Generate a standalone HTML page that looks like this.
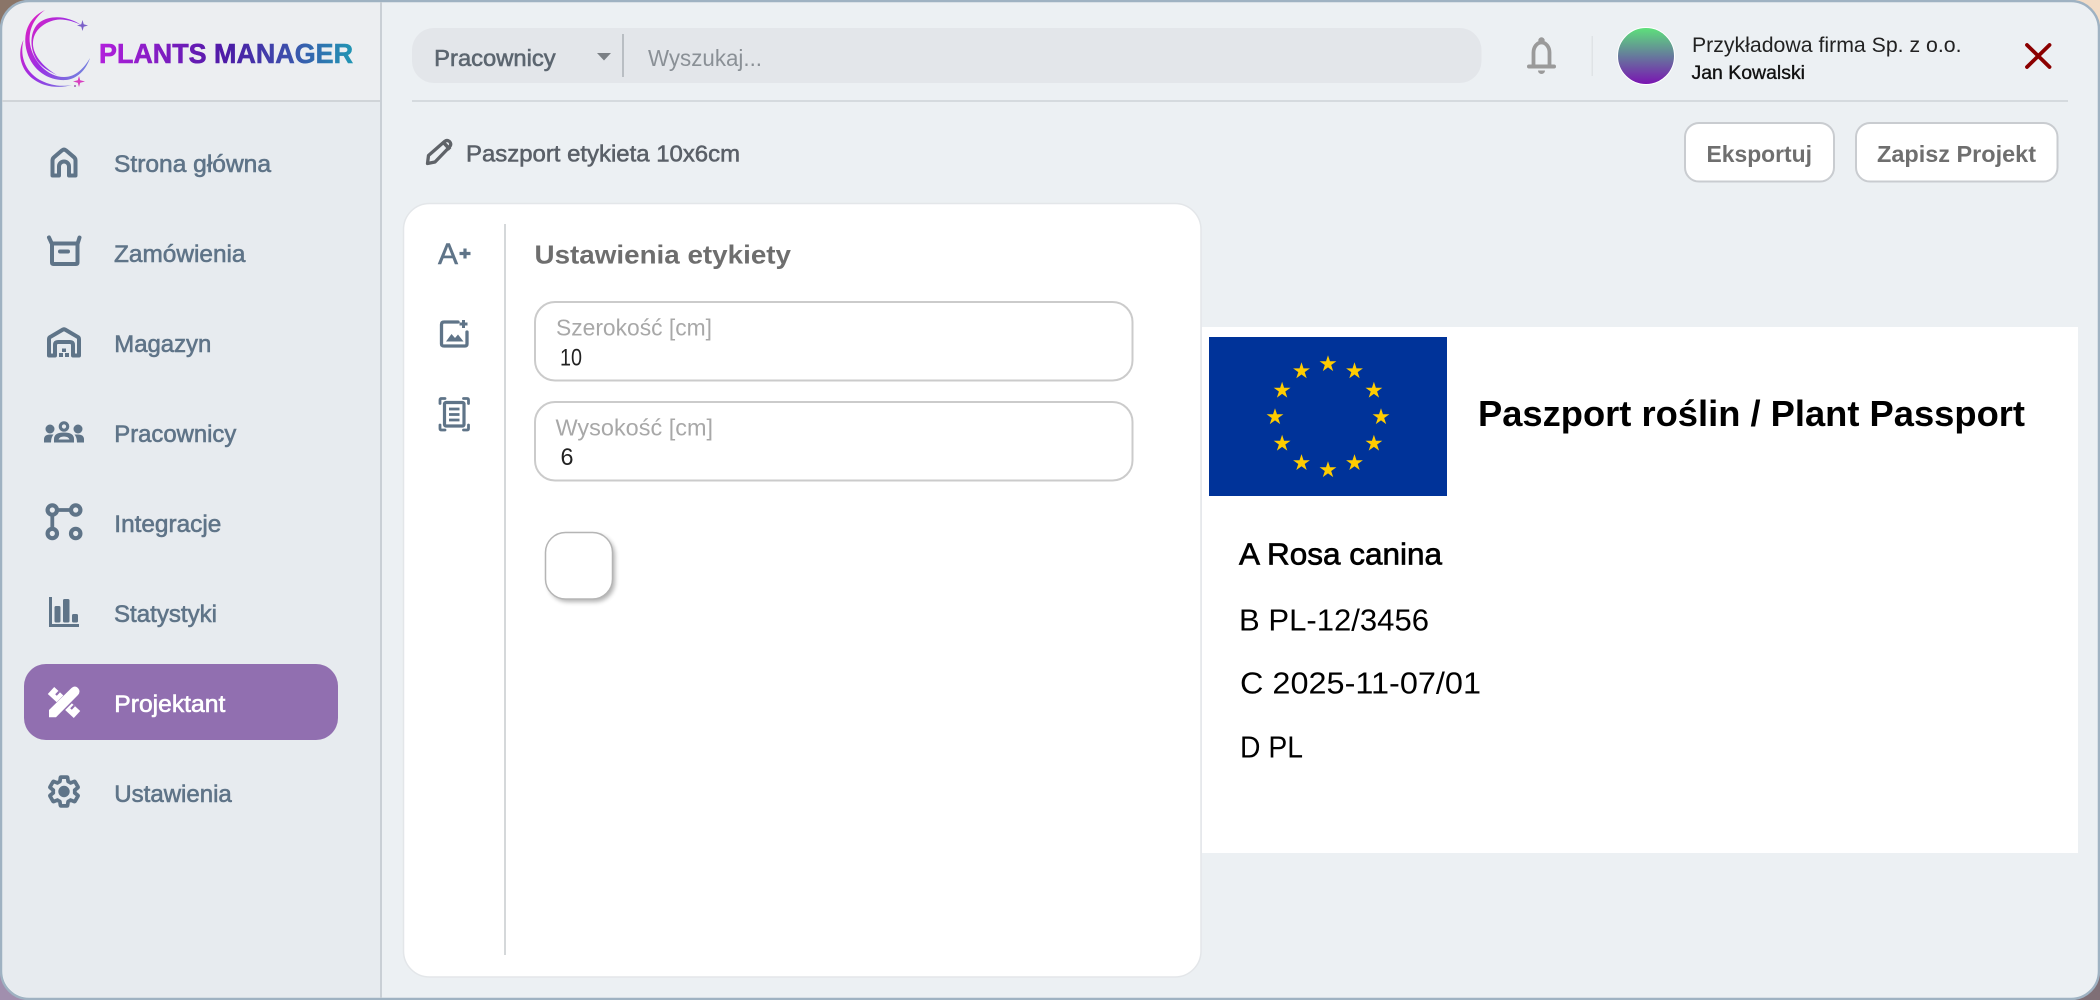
<!DOCTYPE html>
<html lang="pl"><head><meta charset="utf-8"><title>Plants Manager</title>
<style>
html,body{margin:0;padding:0;width:2100px;height:1000px;overflow:hidden;background:#ecf0f3}
svg{display:block}
text{font-family:"Liberation Sans",sans-serif;white-space:pre}
.nav{font-size:24px;fill:#5f7488;stroke:#5f7488;stroke-width:.6px}
.ic{fill:none;stroke:#5f7488;stroke-width:4;stroke-linejoin:round;stroke-linecap:round}
.f{fill:#5f7488}
</style></head><body>
<svg width="2100" height="1000" viewBox="0 0 2100 1000" xmlns="http://www.w3.org/2000/svg">
<defs>
<linearGradient id="lt" gradientUnits="userSpaceOnUse" x1="99" y1="0" x2="353" y2="0"><stop offset="0" stop-color="#b21fdc"/><stop offset=".5" stop-color="#4c1aa6"/><stop offset=".75" stop-color="#3c50ac"/><stop offset="1" stop-color="#2196b4"/></linearGradient>
<linearGradient id="lg" gradientUnits="userSpaceOnUse" x1="20" y1="20" x2="92" y2="70"><stop offset="0" stop-color="#e41fc0"/><stop offset=".5" stop-color="#9a2fe4"/><stop offset="1" stop-color="#6f8ade"/></linearGradient>
<linearGradient id="av" x1="0" y1="0" x2="0" y2="1"><stop offset="0" stop-color="#5de27a"/><stop offset=".5" stop-color="#667a9c"/><stop offset="1" stop-color="#7a12b2"/></linearGradient>
<polygon id="st" points="0,-8.800 5.200,7.100 -8.400,-2.700 8.400,-2.700 -5.200,7.100" fill="#ffcc00"/>
</defs>
<!-- desktop corners -->
<rect x="0" y="0" width="30" height="30" fill="#8a7568"/>
<rect x="2070" y="0" width="30" height="30" fill="#f3dcc6"/>
<rect x="0" y="970" width="30" height="30" fill="#a18fae"/>
<rect x="2070" y="970" width="30" height="30" fill="#7f6f76"/>
<!-- window -->
<rect x="1" y="1" width="2098" height="998" rx="28" fill="#ecf0f3" stroke="#9fb2c2" stroke-width="2.5"/>
<!-- sidebar -->
<path d="M380 2.500H30A27.500 27.500 0 0 0 2.500 30V970A27.500 27.500 0 0 0 30 997.500H380Z" fill="#e7ebef"/>
<path d="M380 2.500H30A27.500 27.500 0 0 0 2.500 30V100H380Z" fill="#eceef1"/>
<rect x="380" y="2" width="2" height="996" fill="#c9cfd5"/>
<rect x="2" y="100" width="378" height="2" fill="#d0d4d8"/>
<!-- logo -->
<path d="M23.500 40C16 55 21 77 45 85C55 88 65 87 72 85C60 87 50 85 42 81C27 74 19 58 23.500 40Z" fill="url(#lg)"/>
<path d="M45 10C28 18 22 34 27 52C33 72 50 81 66 80C77 79 86 70 90 58C84 68 76 77 64 77C48 77 33 62 30 44C28 30 34 18 45 10Z" fill="url(#lg)"/>
<path d="M81 25C70 17 52 14 40 22C29 30 29 50 38 62C43 68 50 72 57 75C43 67 32 54 33 42C34 28 48 20 60 19.500C68 19.500 75 22 81 25Z" fill="url(#lg)"/>
<path d="M82.500 20L83.700 24.300L88 25.500L83.700 26.700L82.500 31L81.300 26.700L77 25.500L81.300 24.300Z" fill="#7a5fc8"/>
<path d="M79 76L80.200 80.300L85 81.500L80.200 82.700L79 87L77.800 82.700L73 81.500L77.800 80.300Z" fill="#d83ec0"/>
<circle cx="75" cy="86" r="1" fill="#9a5fb0"/>
<text x="99" y="63" font-size="28" font-weight="700" fill="url(#lt)" stroke="url(#lt)" stroke-width=".6" textLength="254" lengthAdjust="spacingAndGlyphs">PLANTS MANAGER</text>
<!-- nav -->
<rect x="24" y="664" width="314" height="76" rx="22" fill="#916fb0"/>
<text class="nav" x="114" y="172" textLength="157" lengthAdjust="spacingAndGlyphs">Strona główna</text>
<text class="nav" x="114" y="262" textLength="131.500" lengthAdjust="spacingAndGlyphs">Zamówienia</text>
<text class="nav" x="114.300" y="352" textLength="97" lengthAdjust="spacingAndGlyphs">Magazyn</text>
<text class="nav" x="114.300" y="442" textLength="122" lengthAdjust="spacingAndGlyphs">Pracownicy</text>
<text class="nav" x="114.300" y="532" textLength="107" lengthAdjust="spacingAndGlyphs">Integracje</text>
<text class="nav" x="114" y="622" textLength="103" lengthAdjust="spacingAndGlyphs">Statystyki</text>
<text class="nav" x="114.300" y="712" textLength="111" lengthAdjust="spacingAndGlyphs" style="fill:#fff;stroke:#fff">Projektant</text>
<text class="nav" x="114.300" y="802" textLength="117.500" lengthAdjust="spacingAndGlyphs">Ustawienia</text>
<!-- home -->
<path class="ic" d="M52.500 175.500V160.500Q52.500 158.500 54 157.200L62 150.400Q64 148.800 66 150.400L74 157.200Q75.500 158.500 75.500 160.500V175.500H69V166.500A5 5 0 0 0 59 166.500V175.500Z"/>
<!-- box -->
<path class="ic" d="M49 237.500L52 244V262.500Q52 264 53.500 264H76Q77.500 264 77.500 262.500V244L79.500 237.500M52 243.500H77.500M60 251.500H68"/>
<!-- warehouse -->
<path class="ic" d="M49 355.500V339Q49 337.500 50.500 336.800L63 329.500Q64 329 65 329.500L77.500 336.800Q79 337.500 79 339V355.500H73V345Q73 342 70 342H58Q55 342 55 345V355.500Z"/>
<rect class="f" x="59" y="353" width="4" height="4"/><rect class="f" x="65" y="353" width="4" height="4"/><rect class="f" x="62" y="348.500" width="4" height="3.500"/>
<!-- team -->
<circle cx="64" cy="426.500" r="3.700" fill="none" stroke="#5f7488" stroke-width="3.200"/>
<path class="f" fill-rule="evenodd" d="M54 442.500V439Q54 432.500 64 432.500Q74 432.500 74 439V442.500ZM58.500 439.500H69.500Q68.500 436.500 64 436.500Q59.500 436.500 58.500 439.500Z"/>
<circle class="f" cx="50" cy="429" r="4.500"/><circle class="f" cx="78" cy="429" r="4.500"/>
<path class="f" d="M44 442.500V439.500Q44 434.500 50 434.500H53.500Q51 437.500 51 442.500ZM84 442.500V439.500Q84 434.500 78 434.500H74.500Q77 437.500 77 442.500Z"/>
<!-- integration -->
<g fill="none" stroke="#5f7488" stroke-width="4.200"><circle cx="52.300" cy="510" r="4.700"/><circle cx="75.700" cy="510" r="4.700"/><circle cx="52.300" cy="533.500" r="4.700"/><circle cx="75.700" cy="533.500" r="4.700"/></g>
<path d="M56 510H72M52.300 514V530" stroke="#5f7488" stroke-width="3.800" fill="none"/>
<!-- stats -->
<path d="M50.500 597V625.500H79" fill="none" stroke="#5f7488" stroke-width="3"/>
<rect class="f" x="54.500" y="606" width="6" height="16.500" rx="1.500"/><rect class="f" x="63" y="599" width="6.500" height="23.500" rx="1.500"/><rect class="f" x="72" y="614" width="6" height="8.500" rx="1.500"/>
<!-- tools active -->
<path d="M51 690.500L77 714.500" stroke="#fff" stroke-width="9.500"/>
<path d="M56 695L59.200 691.600M71 709L74.200 705.600" stroke="#916fb0" stroke-width="2.200" fill="none"/>
<path d="M77 690L53 714" stroke="#916fb0" stroke-width="11.500"/>
<path d="M49 717.300V710L71.500 688Q75 685 78 688Q81 691.500 78 695L56 717.300Z" fill="#fff"/>
<!-- gear -->
<g transform="translate(46 773.500) scale(1.500)"><path fill="none" stroke="#5f7488" stroke-width="2.500" stroke-linejoin="round" d="M19.140 12.940c.04-.3.06-.61.06-.94 0-.32-.02-.64-.07-.94l2.030-1.580c.18-.14.23-.41.12-.61l-1.920-3.320c-.12-.22-.37-.29-.59-.22l-2.390.96c-.5-.38-1.030-.7-1.620-.94l-.36-2.540c-.04-.24-.24-.41-.48-.41h-3.840c-.24 0-.43.17-.47.41l-.36 2.540c-.59.24-1.130.57-1.620.94l-2.390-.96c-.22-.08-.47 0-.59.22L2.740 8.870c-.12.21-.08.47.12.61l2.030 1.580c-.05.3-.09.63-.09.94s.02.64.07.94l-2.030 1.580c-.18.14-.23.41-.12.61l1.920 3.320c.12.22.37.29.59.22l2.390-.96c.5.38 1.030.7 1.620.94l.36 2.540c.05.24.24.41.48.41h3.840c.24 0 .44-.17.47-.41l.36-2.540c.59-.24 1.130-.56 1.620-.94l2.390.96c.22.08.47 0 .59-.22l1.920-3.320c.12-.22.07-.47-.12-.61l-2.010-1.580z"/><circle cx="12" cy="12" r="3.800" fill="#5f7488"/></g>
<!-- search -->
<rect x="412" y="28" width="1069.500" height="55" rx="22" fill="#e3e6ea"/>
<text x="434.200" y="66" font-size="23" fill="#5c6670" stroke="#5c6670" stroke-width=".6" textLength="121.500" lengthAdjust="spacingAndGlyphs">Pracownicy</text>
<path d="M597 53H611L604 60.500Z" fill="#7b8085"/>
<rect x="622" y="34" width="2" height="43" fill="#b9bec3"/>
<text x="648" y="66" font-size="23" fill="#8a9096" textLength="114" lengthAdjust="spacingAndGlyphs">Wyszukaj...</text>
<rect x="412" y="100" width="1656" height="2" fill="#d5dade"/>
<!-- bell -->
<path d="M1533.500 66V52.500A8 10 0 0 1 1549.500 52.500V66" fill="none" stroke="#9a9a9a" stroke-width="3.800"/>
<path d="M1529 66.500H1554" stroke="#9a9a9a" stroke-width="4" stroke-linecap="round"/>
<circle cx="1541.500" cy="40.500" r="3.200" fill="#9a9a9a"/>
<path d="M1538 70.500H1545A3.500 3.500 0 0 1 1538 70.500Z" fill="#9a9a9a"/>
<rect x="1591.500" y="36" width="1.500" height="40" fill="#dfe3e6"/>
<circle cx="1646" cy="56" r="28.500" fill="url(#av)" stroke="#fff" stroke-width="1"/>
<text x="1692" y="52" font-size="21" fill="#222" textLength="269.500" lengthAdjust="spacingAndGlyphs">Przykładowa firma Sp. z o.o.</text>
<text x="1691.500" y="79" font-size="19" fill="#111" stroke="#111" stroke-width=".35" textLength="113.500" lengthAdjust="spacingAndGlyphs">Jan Kowalski</text>
<path d="M2027 45L2049.500 67M2049.500 45L2027 67" stroke="#8b0000" stroke-width="3.800" stroke-linecap="round"/>
<!-- subheader -->
<path d="M427.500 163.500L428.500 155.500L444.500 141.500Q447 139.500 449.500 141.500Q452 144 449.500 147L435 162Z" fill="none" stroke="#5f6368" stroke-width="3.300" stroke-linejoin="round"/>
<path d="M443.500 142.500L450 149.500" stroke="#5f6368" stroke-width="3.500"/>
<text x="466" y="161.500" font-size="23" fill="#5a6068" stroke="#5a6068" stroke-width=".55" textLength="274" lengthAdjust="spacingAndGlyphs">Paszport etykieta 10x6cm</text>
<rect x="1685" y="123" width="149" height="58.500" rx="14" fill="#fff" stroke="#c9ccd0" stroke-width="2"/>
<text x="1706.500" y="162" font-size="23" font-weight="700" fill="#6f6f6f" textLength="105.500" lengthAdjust="spacingAndGlyphs">Eksportuj</text>
<rect x="1856" y="123" width="201.500" height="58.500" rx="14" fill="#fff" stroke="#c9ccd0" stroke-width="2"/>
<text x="1877" y="162" font-size="23" font-weight="700" fill="#6f6f6f" textLength="159" lengthAdjust="spacingAndGlyphs">Zapisz Projekt</text>
<!-- left panel -->
<rect x="403.500" y="203.500" width="797.500" height="773.500" rx="26" fill="#fff" stroke="#e3e6e9" stroke-width="1.500"/>
<rect x="504" y="224" width="2" height="731" fill="#d5d8da"/>
<text x="438" y="264" font-size="30" fill="#5f7488" stroke="#5f7488" stroke-width=".5" textLength="20" lengthAdjust="spacingAndGlyphs">A</text>
<path d="M459.500 253.500H470.500M465 248.500V258.500" stroke="#5f7488" stroke-width="3.200" fill="none"/>
<path class="ic" d="M458 322H444Q441.500 322 441.500 324.500V344Q441.500 346 444 346H465Q467 346 467 344V332" style="stroke-width:3.300"/>
<path d="M463.500 320V328M459.500 324H467.500" stroke="#5f7488" stroke-width="3" fill="none"/>
<path class="f" d="M446 341.500L451.500 334L455 338L458 334.500L463.500 341.500Z"/>
<rect x="444.500" y="402.500" width="19.500" height="23.500" rx="1.500" fill="none" stroke="#5f7488" stroke-width="3.200"/>
<path d="M449 409H459.500M449 414.500H459.500M449 420H459.500" stroke="#5f7488" stroke-width="2.800" fill="none"/>
<path d="M440 403.500V400Q440 398.500 441.500 398.500H445M463.500 398.500H467Q468.500 398.500 468.500 400V403.500M440 425V428.500Q440 430 441.500 430H445M463.500 430H467Q468.500 430 468.500 428.500V425" fill="none" stroke="#5f7488" stroke-width="2.800" stroke-linecap="round"/>
<text x="534.500" y="263.500" font-size="26" font-weight="700" fill="#6e6e6e" textLength="256.500" lengthAdjust="spacingAndGlyphs">Ustawienia etykiety</text>
<rect x="535" y="302" width="597.500" height="78.500" rx="20" fill="#fff" stroke="#cbcbcb" stroke-width="2"/>
<text x="556" y="335.500" font-size="23" fill="#a8a8a8" textLength="156" lengthAdjust="spacingAndGlyphs">Szerokość [cm]</text>
<text x="560" y="365.500" font-size="24" fill="#222" textLength="22" lengthAdjust="spacingAndGlyphs">10</text>
<rect x="535" y="402" width="597.500" height="78.500" rx="20" fill="#fff" stroke="#cbcbcb" stroke-width="2"/>
<text x="555.500" y="435.500" font-size="23" fill="#a8a8a8" textLength="157.500" lengthAdjust="spacingAndGlyphs">Wysokość [cm]</text>
<text x="560.500" y="465" font-size="24" fill="#222" textLength="13" lengthAdjust="spacingAndGlyphs">6</text>
<rect x="548" y="535" width="67" height="67" rx="20" fill="#000" opacity=".3" style="filter:blur(2.500px)"/>
<rect x="545.500" y="532.500" width="67" height="66.500" rx="20" fill="#fff" stroke="#b5b5b5" stroke-width="1.500"/>
<!-- label preview -->
<rect x="1202" y="327" width="876" height="526" fill="#fff"/>
<rect x="1209" y="337" width="238" height="159" fill="#003399"/>
<use href="#st" x="1328" y="364"/><use href="#st" x="1354.500" y="371.100"/><use href="#st" x="1373.900" y="390.500"/><use href="#st" x="1381" y="417"/><use href="#st" x="1373.900" y="443.500"/><use href="#st" x="1354.500" y="462.900"/><use href="#st" x="1328" y="470"/><use href="#st" x="1301.500" y="462.900"/><use href="#st" x="1282.100" y="443.500"/><use href="#st" x="1275" y="417"/><use href="#st" x="1282.100" y="390.500"/><use href="#st" x="1301.500" y="371.100"/>
<text x="1478" y="426" font-size="36" font-weight="700" fill="#000" textLength="547" lengthAdjust="spacingAndGlyphs">Paszport roślin / Plant Passport</text>
<text x="1239" y="564.700" font-size="31" fill="#000" stroke="#000" stroke-width=".7" textLength="203" lengthAdjust="spacingAndGlyphs">A Rosa canina</text>
<text x="1239" y="630.700" font-size="31" fill="#000" textLength="190" lengthAdjust="spacingAndGlyphs">B PL-12/3456</text>
<text x="1240" y="693.700" font-size="31" fill="#000" textLength="241" lengthAdjust="spacingAndGlyphs">C 2025-11-07/01</text>
<text x="1240" y="757.700" font-size="31" fill="#000" textLength="63" lengthAdjust="spacingAndGlyphs">D PL</text>
</svg>
</body></html>
